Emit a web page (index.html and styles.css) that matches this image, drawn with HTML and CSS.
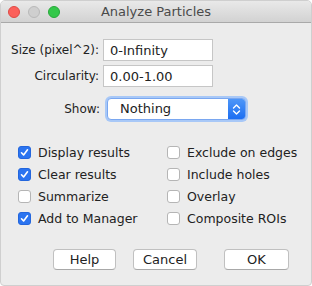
FILE: index.html
```html
<!DOCTYPE html>
<html lang="en">
<head>
    <meta charset="UTF-8">
    <title>Analyze Particles</title>
    <link rel="stylesheet" href="styles.css">
</head>
<body>
    <div class="window">
        <div class="titlebar">
            <div class="lights">
                <span class="light red"></span>
                <span class="light gray"></span>
                <span class="light green"></span>
            </div>
            <div class="title">Analyze Particles</div>
            <div></div>
        </div>

        <div class="fields">
            <label class="label">Size (pixel^2):</label>
            <div class="field">0-Infinity</div>
            <label class="label">Circularity:</label>
            <div class="field">0.00-1.00</div>
        </div>

        <div class="show-row">
            <label class="label">Show:</label>
            <div class="select">
                <span class="select-text">Nothing</span>
                <span class="select-arrow">
                    <svg width="9" height="13" viewBox="0 0 9 13">
                        <path d="M1.5 5 L4.5 2 L7.5 5 M1.5 8 L4.5 11 L7.5 8" fill="none" stroke="#fff" stroke-width="1.4" stroke-linecap="round" stroke-linejoin="round"/>
                    </svg>
                </span>
            </div>
        </div>

        <div class="checks">
            <div class="check"><span class="box on"></span>Display results</div>
            <div class="check"><span class="box"></span>Exclude on edges</div>
            <div class="check"><span class="box on"></span>Clear results</div>
            <div class="check"><span class="box"></span>Include holes</div>
            <div class="check"><span class="box"></span>Summarize</div>
            <div class="check"><span class="box"></span>Overlay</div>
            <div class="check"><span class="box on"></span>Add to Manager</div>
            <div class="check"><span class="box"></span>Composite ROIs</div>
        </div>

        <div class="buttons">
            <button class="btn help">Help</button>
            <button class="btn cancel">Cancel</button>
            <button class="btn ok">OK</button>
        </div>
    </div>
</body>
</html>
```

FILE: styles.css
```css
body {
    margin: 0;
    background: #ffffff;
    font-family: "DejaVu Sans", sans-serif;
    font-size: 12px;
    color: #222;
}
.window {
    width: 312px;
    height: 286px;
    box-sizing: border-box;
    background: #ececec;
    border: 1px solid #cfcfcf;
    border-radius: 5px 5px 4px 4px;
    overflow: hidden;
}
.titlebar {
    height: 21px;
    background: linear-gradient(#e9e9e9, #d2d2d2);
    border-bottom: 1px solid #a9a9a9;
    display: grid;
    grid-template-columns: 1fr auto 1fr;
    align-items: center;
}
.lights {
    display: flex;
    gap: 8px;
    padding-left: 7px;
}
.light {
    width: 12px;
    height: 12px;
    border-radius: 50%;
    box-sizing: border-box;
}
.red { background: #fc605b; border: 1px solid #de4a45; }
.gray { background: #cfcfcf; border: 1px solid #b9b9b9; }
.green { background: #34c84a; border: 1px solid #27a83a; }
.title {
    white-space: nowrap;
    font-size: 13px;
    color: #4a4a4a;
}
.fields {
    display: grid;
    grid-template-columns: 98px 110px;
    column-gap: 4px;
    row-gap: 4px;
    margin-top: 16px;
}
.label {
    text-align: right;
    align-self: center;
}
.field {
    height: 22px;
    box-sizing: border-box;
    background: #fff;
    border: 1px solid #c6c6c6;
    padding: 3px 6px;
    font-size: 13px;
}
.show-row {
    display: grid;
    grid-template-columns: 99px 139px;
    column-gap: 7px;
    margin-top: 11px;
}
.select {
    height: 22px;
    box-sizing: border-box;
    background: #fff;
    border: 1px solid #7aa7f0;
    box-shadow: 0 0 0 2px #a8c8f7;
    border-radius: 4px;
    display: flex;
    overflow: hidden;
}
.select-text {
    flex: 1;
    padding: 2px 0 0 12px;
    font-size: 13px;
}
.select-arrow {
    width: 17px;
    background: linear-gradient(#4d96f8, #1c6ef2);
    display: flex;
    align-items: center;
    justify-content: center;
}
.checks {
    display: grid;
    grid-template-columns: 149px 140px;
    row-gap: 6px;
    margin: 24px 0 0 17px;
}
.check {
    display: flex;
    align-items: center;
    gap: 7px;
    height: 16px;
    font-size: 12.5px;
}
.box {
    width: 13px;
    height: 13px;
    box-sizing: border-box;
    background: #fff;
    border: 1px solid #b5b5b5;
    border-radius: 3px;
}
.box.on {
    background: #2b74f0 url("data:image/svg+xml,%3Csvg xmlns='http://www.w3.org/2000/svg' width='13' height='13'%3E%3Cpath d='M3.5 6.8 L5.6 9 L9.5 3.8' fill='none' stroke='white' stroke-width='1.6' stroke-linecap='round' stroke-linejoin='round'/%3E%3C/svg%3E") center / 13px 13px no-repeat;
    border-color: #2366dd;
}
.buttons {
    display: flex;
    margin: 23px 0 0 52px;
}
.btn {
    height: 21px;
    box-sizing: border-box;
    background: #fff;
    border: 1px solid #c0c0c0;
    border-bottom-color: #a8a8a8;
    border-radius: 4px;
    font-family: "DejaVu Sans", sans-serif;
    font-size: 13px;
    color: #222;
    padding: 0;
}
.help { width: 63px; }
.cancel { width: 64px; margin-left: 17px; }
.ok { width: 65px; margin-left: 27px; }
```
